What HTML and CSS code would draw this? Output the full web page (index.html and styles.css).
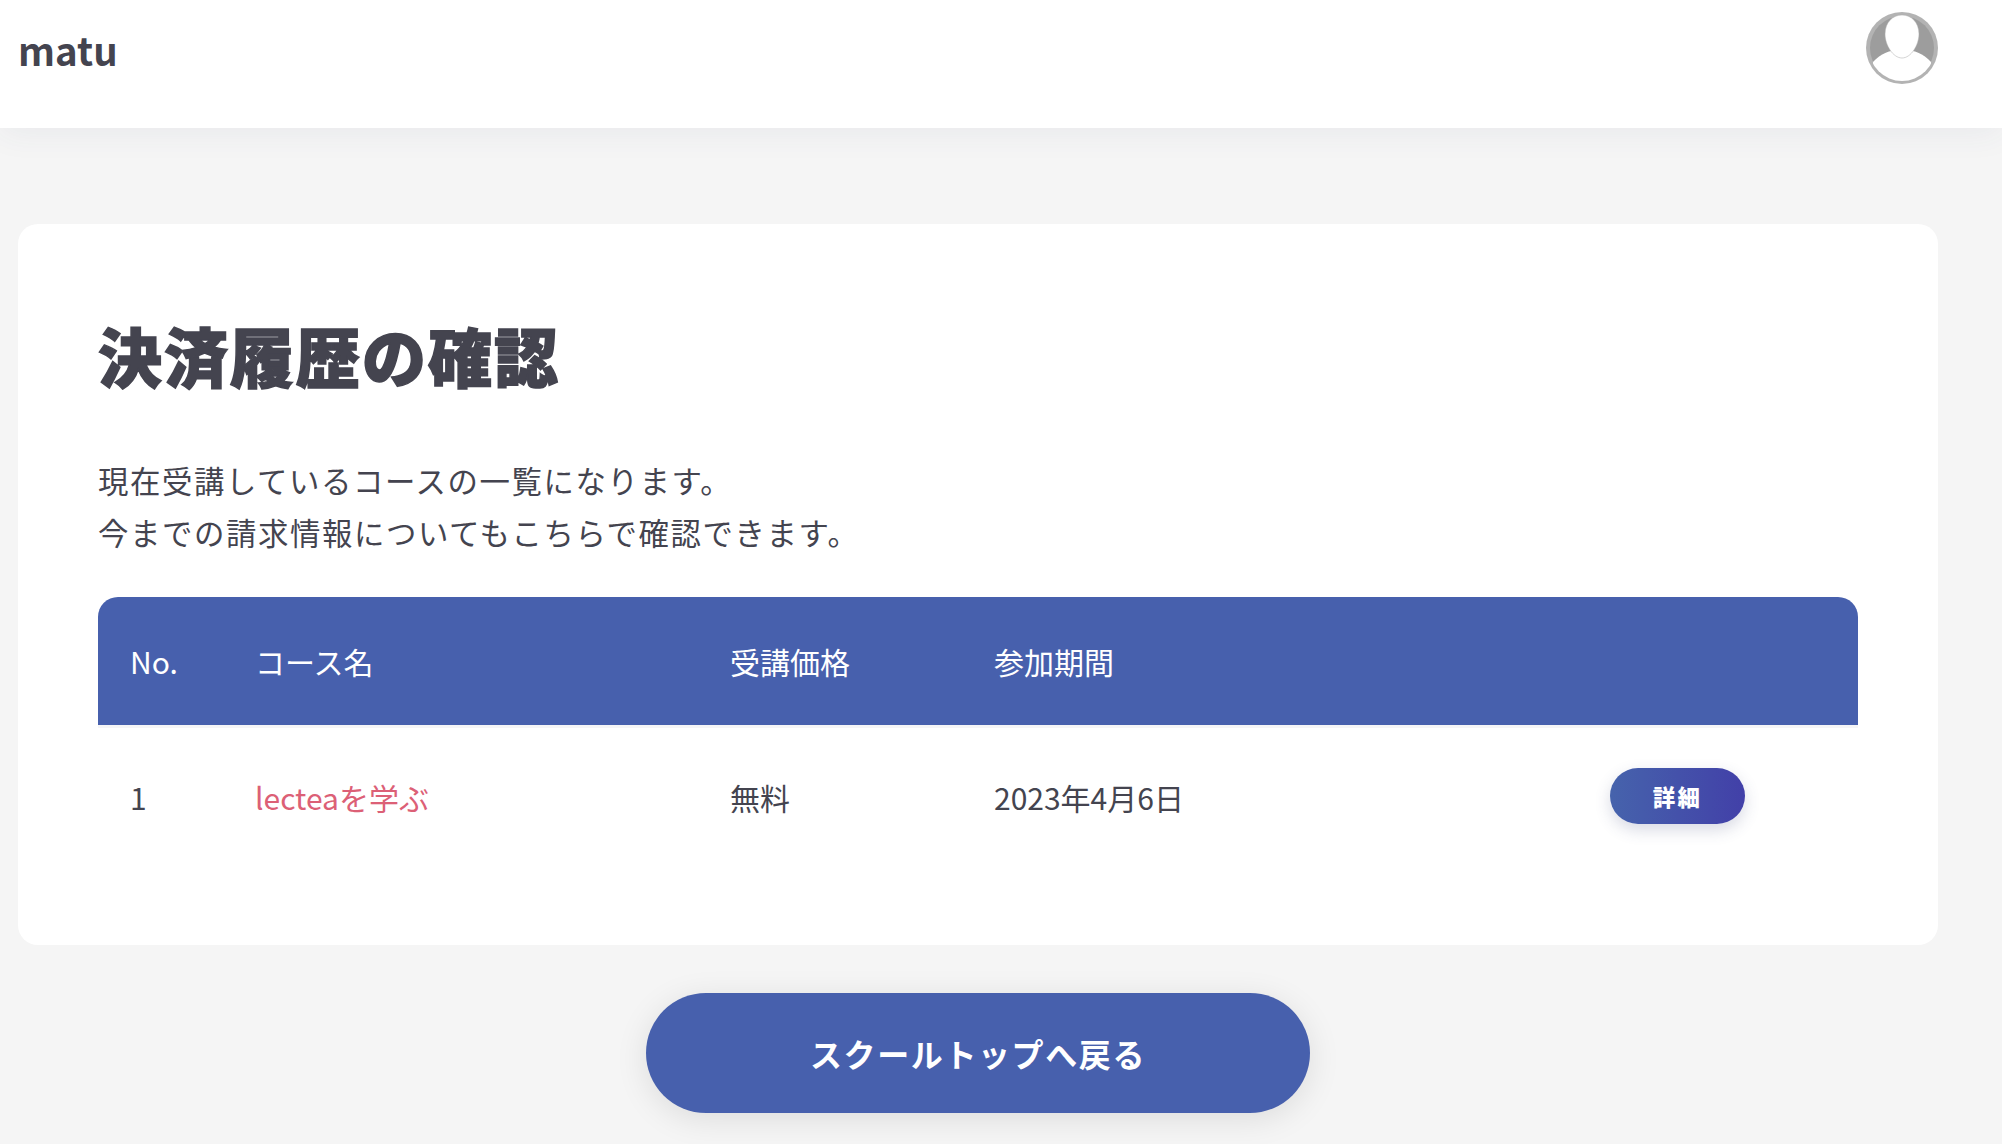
FILE: index.html
```html
<!DOCTYPE html>
<html lang="ja">
  <head>
    <meta charset="UTF-8" />
    <meta name="viewport" content="width=device-width, initial-scale=1.0" />
    <title>決済履歴の確認</title>
    <link rel="stylesheet" href="styles.css">
  </head>
  <body>
    <header class="site-header">
      <div class="logo">matu</div>
      <svg class="avatar" viewBox="0 0 72 72" width="72" height="72" aria-label="ユーザー">
        <defs>
          <clipPath id="avatar-clip"><circle cx="36" cy="36" r="33"/></clipPath>
        </defs>
        <circle cx="36" cy="36" r="36" fill="#b3b3b3"/>
        <circle cx="36" cy="36" r="32" fill="#9d9d9d"/>
        <g clip-path="url(#avatar-clip)">
          <path d="M7 50 C15 41 24 39 30 38 L42 38 C48 39 57 41 65 50 L65 72 L7 72 Z" fill="#fff"/>
        </g>
        <path d="M36 3 C45 3 53 10 53 22 C53 33 45 46 36 46 C27 46 19 33 19 22 C19 10 27 3 36 3 Z" fill="#fff" stroke="#a8a8a8" stroke-width="0.5"/>
      </svg>
    </header>

    <main class="content">
      <section class="card">
        <h1 class="card-title">決済履歴の確認</h1>
        <p class="card-lead">現在受講しているコースの一覧になります。<br />今までの請求情報についてもこちらで確認できます。</p>
        <table class="history">
          <thead>
            <tr>
              <th class="col-no">No.</th>
              <th class="col-name">コース名</th>
              <th class="col-price">受講価格</th>
              <th class="col-date">参加期間</th>
              <th></th>
            </tr>
          </thead>
          <tbody>
            <tr>
              <td>1</td>
              <td><a class="course-link" href="#">lecteaを学ぶ</a></td>
              <td>無料</td>
              <td>2023年4月6日</td>
              <td class="cell-action"><a class="btn-detail" href="#">詳細</a></td>
            </tr>
          </tbody>
        </table>
      </section>
      <div class="back">
        <a class="btn-back" href="#">スクールトップへ戻る</a>
      </div>
    </main>
  </body>
</html>
```

FILE: styles.css
```css
* {
  box-sizing: border-box;
}
html,
body {
  margin: 0;
  padding: 0;
}
body {
  background: #f5f5f5;
  color: #44444f;
  font-family: "Noto Sans CJK JP", "Noto Sans", sans-serif;
  font-size: 30px;
}
a {
  text-decoration: none;
}

.site-header {
  height: 128px;
  background: #fff;
  box-shadow: 0 4px 32px rgba(60, 70, 110, 0.07);
  display: flex;
  justify-content: space-between;
  padding: 12px 64px 0 18px;
}
.logo {
  font-size: 38.4px;
  font-weight: 700;
  line-height: 74px;
}
.avatar {
  display: block;
}

.content {
  padding: 96px 64px 31px 18px;
}
.card {
  background: #fff;
  border-radius: 20px;
  height: 721px;
  padding: 84px 80px 0;
}
.card-title {
  margin: 0;
  font-size: 64px;
  font-weight: 900;
  line-height: 92px;
  letter-spacing: 2px;
  -webkit-text-stroke: 1.5px #44444f;
}
.card-lead {
  margin: 55px 0 0;
  font-size: 30.4px;
  line-height: 51.5px;
  letter-spacing: 1.6px;
}

.history {
  width: 100%;
  margin-top: 39px;
  border-collapse: separate;
  border-spacing: 0;
  table-layout: fixed;
}
.history th {
  height: 128px;
  background: #4760ad;
  color: #fff;
  font-weight: 400;
  text-align: left;
  padding: 0 0 0 32px;
}
.history th:first-child {
  border-top-left-radius: 20px;
}
.history th:last-child {
  border-top-right-radius: 20px;
}
.col-no {
  width: 125px;
}
.col-name {
  width: 475px;
}
.col-price {
  width: 264px;
}
.col-date {
  width: 520px;
}
.history td {
  height: 141px;
  padding: 0 0 0 32px;
  border-top: 3px solid #f5f5f7;
}
.history td:first-child {
  padding-left: 32px;
}
.course-link {
  color: #dc6076;
}
.history td.cell-action {
  padding: 0;
}
.btn-detail {
  display: block;
  width: 135px;
  height: 56px;
  margin: -2px 0 0 128px;
  border-radius: 28px;
  background: linear-gradient(90deg, #4663ac, #4240a8);
  box-shadow: 0 6px 16px rgba(60, 70, 120, 0.2);
  color: #fff;
  font-size: 22.4px;
  font-weight: 900;
  line-height: 56px;
  text-align: center;
  letter-spacing: 2.4px;
}

.back {
  margin-top: 48px;
  display: flex;
  justify-content: center;
}
.btn-back {
  display: block;
  width: 664px;
  height: 120px;
  border-radius: 60px;
  background: #4760ad;
  box-shadow: 0 6px 32px rgba(0, 0, 0, 0.1);
  color: #fff;
  font-size: 32px;
  font-weight: 700;
  line-height: 120px;
  text-align: center;
  letter-spacing: 1.6px;
}
```
